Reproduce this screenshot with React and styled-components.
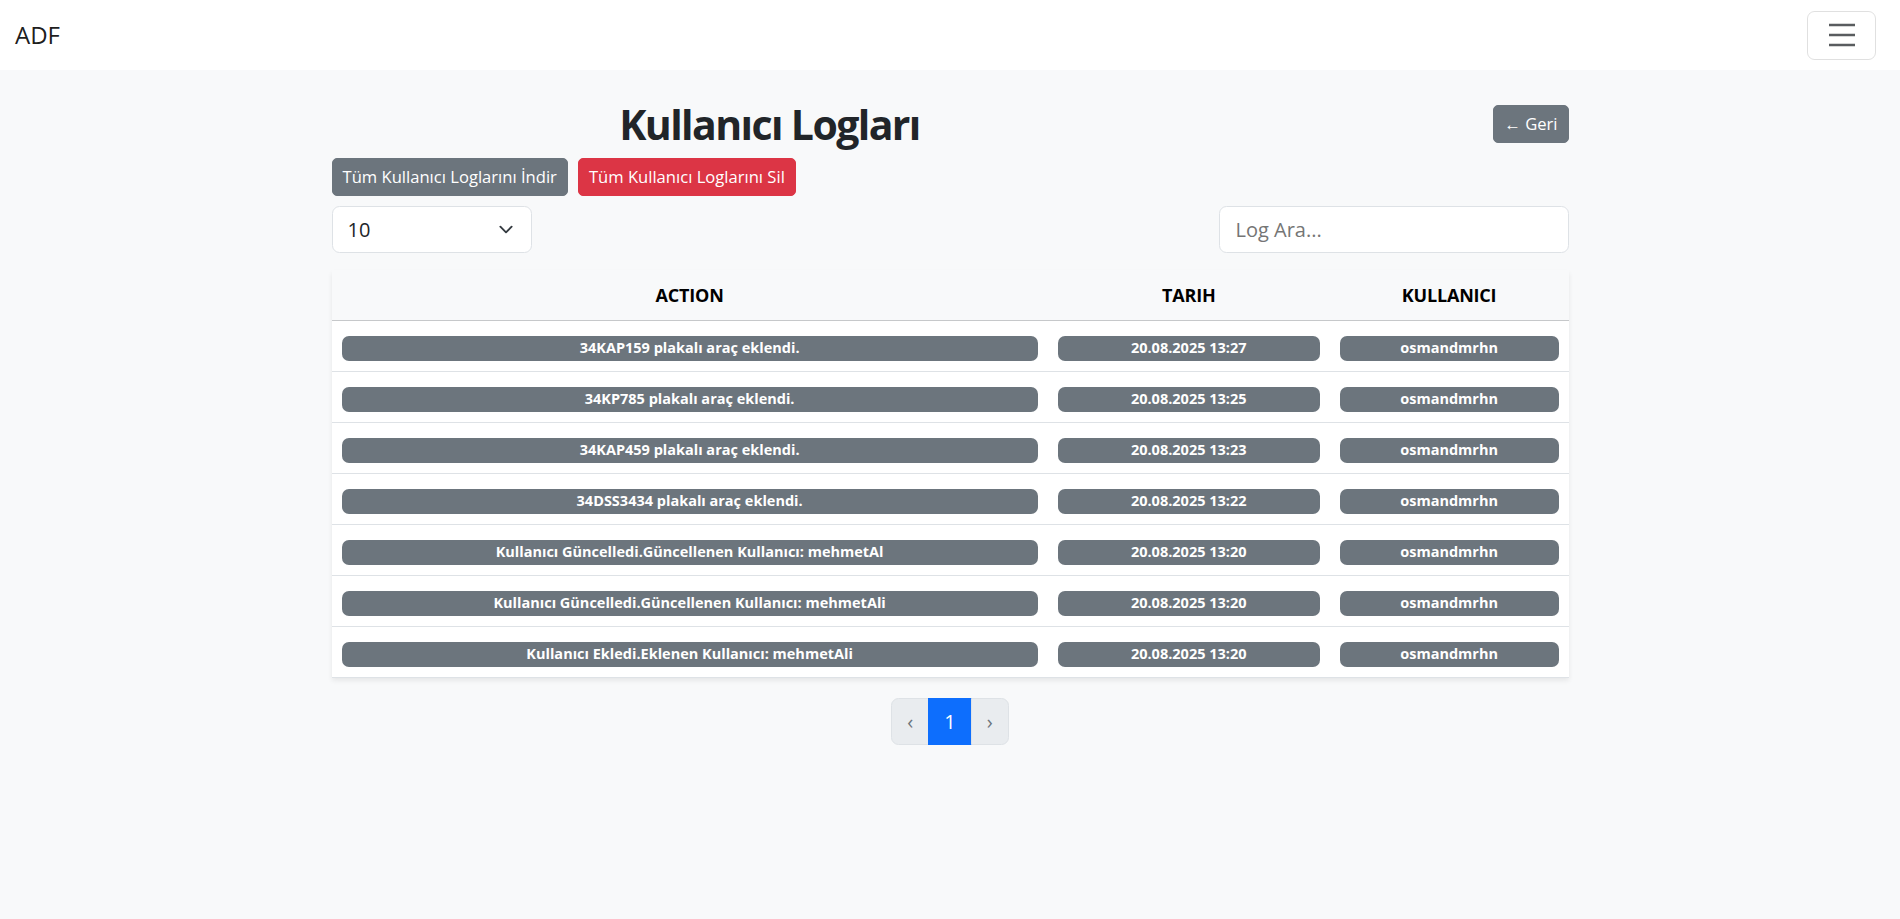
import React, { useState } from 'react';
import styled, { createGlobalStyle } from 'styled-components';

const logs = [
    { action: '34KAP159 plakalı araç eklendi.', date: '20.08.2025 13:27', user: 'osmandmrhn' },
    { action: '34KP785 plakalı araç eklendi.', date: '20.08.2025 13:25', user: 'osmandmrhn' },
    { action: '34KAP459 plakalı araç eklendi.', date: '20.08.2025 13:23', user: 'osmandmrhn' },
    { action: '34DSS3434 plakalı araç eklendi.', date: '20.08.2025 13:22', user: 'osmandmrhn' },
    { action: 'Kullanıcı Güncelledi.Güncellenen Kullanıcı: mehmetAl', date: '20.08.2025 13:20', user: 'osmandmrhn' },
    { action: 'Kullanıcı Güncelledi.Güncellenen Kullanıcı: mehmetAli', date: '20.08.2025 13:20', user: 'osmandmrhn' },
    { action: 'Kullanıcı Ekledi.Eklenen Kullanıcı: mehmetAli', date: '20.08.2025 13:20', user: 'osmandmrhn' },
];

const chevron = "data:image/svg+xml,%3csvg xmlns='http://www.w3.org/2000/svg' viewBox='0 0 16 16'%3e%3cpath fill='none' stroke='%23343a40' stroke-linecap='round' stroke-linejoin='round' stroke-width='2' d='m2 5 6 6 6-6'/%3e%3c/svg%3e";

function App() {
    const [perPage, setPerPage] = useState('10');
    const [search, setSearch] = useState('');

    return (
        <>
            <GlobalStyle />
            <Navbar>
                <Brand>ADF</Brand>
                <Toggler aria-label="menu">
                    <svg width="28" height="24" viewBox="0 0 28 24">
                        <path d="M1 2h26M1 12h26M1 22h26" stroke="rgba(33,37,41,0.75)" strokeWidth="2.5" />
                    </svg>
                </Toggler>
            </Navbar>

            <Container>
                <HeaderRow>
                    <Title>Kullanıcı Logları</Title>
                    <Button>← Geri</Button>
                </HeaderRow>

                <ActionRow>
                    <Button>Tüm Kullanıcı Loglarını İndir</Button>
                    <Button $variant="danger">Tüm Kullanıcı Loglarını Sil</Button>
                </ActionRow>

                <FilterRow>
                    <Select value={perPage} onChange={(e) => setPerPage(e.target.value)}>
                        <option>10</option>
                        <option>25</option>
                        <option>50</option>
                    </Select>
                    <SearchInput
                        placeholder="Log Ara..."
                        value={search}
                        onChange={(e) => setSearch(e.target.value)}
                    />
                </FilterRow>

                <Table>
                    <colgroup>
                        <col style={{ width: '57.9%' }} />
                        <col style={{ width: '22.8%' }} />
                        <col style={{ width: '19.3%' }} />
                    </colgroup>
                    <thead>
                        <tr>
                            <Th>ACTION</Th>
                            <Th>TARIH</Th>
                            <Th>KULLANICI</Th>
                        </tr>
                    </thead>
                    <tbody>
                        {logs.map((log, i) => (
                            <tr key={i}>
                                <Td><Badge>{log.action}</Badge></Td>
                                <Td><Badge>{log.date}</Badge></Td>
                                <Td><Badge>{log.user}</Badge></Td>
                            </tr>
                        ))}
                    </tbody>
                </Table>

                <Pagination>
                    <PageLink $disabled>‹</PageLink>
                    <PageLink $active>1</PageLink>
                    <PageLink $disabled>›</PageLink>
                </Pagination>
            </Container>
        </>
    );
}

const GlobalStyle = createGlobalStyle`
    * { box-sizing: border-box; }
    body {
        margin: 0;
        background: #f8f9fa;
        color: #212529;
        font-family: "Open Sans", "Noto Sans", sans-serif;
        font-size: 20px;
        line-height: 1.5;
    }
`

const Navbar = styled.nav`
    height: 70px;
    background: #fff;
    display: flex;
    align-items: center;
    justify-content: space-between;
    padding: 0 24px 0 15px;
`

const Brand = styled.span`
    font-size: 24px;
    color: rgba(0, 0, 0, 0.9);
`

const Toggler = styled.button`
    width: 69px;
    height: 49px;
    background: transparent;
    border: 1px solid rgba(0, 0, 0, 0.12);
    border-radius: 7.5px;
    display: flex;
    align-items: center;
    justify-content: center;
    padding: 0;
`

const Container = styled.main`
    width: 1237px;
    margin: 0 auto;
    padding-top: 27px;
`

const HeaderRow = styled.div`
    display: flex;
    align-items: center;
    justify-content: space-between;
`

const Title = styled.h1`
    width: 876px;
    margin: 0;
    text-align: center;
    font-size: 41px;
    line-height: 54px;
    font-weight: 700;
    letter-spacing: -1.6px;
`

const Button = styled.button`
    font-family: inherit;
    font-size: 16.6px;
    line-height: 26px;
    padding: 5px 10px;
    border: 1px solid ${p => p.$variant === 'danger' ? '#dc3545' : '#6c757d'};
    background: ${p => p.$variant === 'danger' ? '#dc3545' : '#6c757d'};
    color: #fff;
    border-radius: 5px;
    cursor: pointer;
`

const ActionRow = styled.div`
    display: flex;
    gap: 10px;
    margin-top: 7px;
`

const FilterRow = styled.div`
    display: flex;
    justify-content: space-between;
    margin-top: 10px;
`

const Select = styled.select`
    appearance: none;
    width: 200px;
    height: 47px;
    font-family: inherit;
    font-size: 20px;
    color: #212529;
    padding: 7px 45px 7px 15px;
    border: 1px solid #dee2e6;
    border-radius: 7.5px;
    background: #fff url("${chevron}") no-repeat right 15px center / 20px 15px;
`

const SearchInput = styled.input`
    width: 350px;
    height: 47px;
    font-family: inherit;
    font-size: 20px;
    color: #212529;
    padding: 7px 16px;
    border: 1px solid #dee2e6;
    border-radius: 7.5px;
    background: #fff;

    ::placeholder {
        color: #6c757d;
    }
`

const Table = styled.table`
    width: 100%;
    margin-top: 17px;
    border-collapse: collapse;
    table-layout: fixed;
    background: #fff;
    box-shadow: 0 2.5px 5px rgba(0, 0, 0, 0.08);
`

const Th = styled.th`
    padding: 10px;
    background: #f8f9fa;
    color: #000;
    font-size: 18px;
    font-weight: 700;
    text-align: center;
    line-height: 30px;
    letter-spacing: -0.2px;
    border-bottom: 1px solid #c6c8ca;
`

const Td = styled.td`
    padding: 10px;
    line-height: 30px;
    text-align: center;
    border-bottom: 1px solid #dee2e6;
`

const Badge = styled.span`
    display: inline-block;
    width: 100%;
    padding: 5.25px 9.75px;
    font-size: 14.5px;
    font-weight: 700;
    line-height: 1;
    color: #fff;
    background: #6c757d;
    border-radius: 7px;
    white-space: nowrap;
`

const Pagination = styled.div`
    display: flex;
    justify-content: center;
    margin-top: 20px;
`

const PageLink = styled.span`
    display: block;
    padding: 7.5px 15px;
    line-height: 30px;
    font-size: 20px;
    border: 1px solid ${p => p.$active ? '#0d6efd' : '#dee2e6'};
    margin-left: -1px;
    background: ${p => p.$active ? '#0d6efd' : '#e9ecef'};
    color: ${p => p.$active ? '#fff' : '#6c757d'};

    &:first-child {
        margin-left: 0;
        border-radius: 7.5px 0 0 7.5px;
    }
    &:last-child {
        border-radius: 0 7.5px 7.5px 0;
    }
`

export default App
